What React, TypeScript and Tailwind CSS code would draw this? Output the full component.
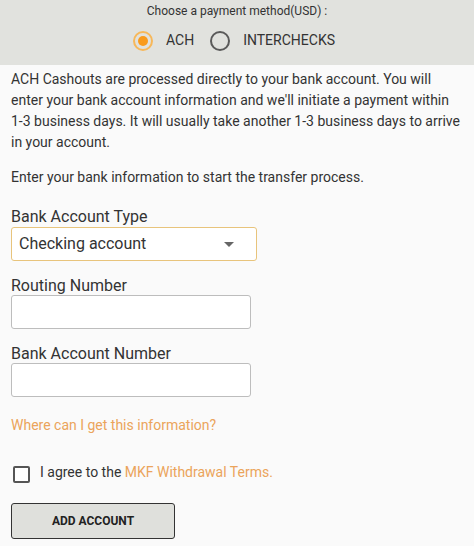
import { useState } from 'react';

type Method = 'ach' | 'interchecks';

function Radio({ checked, label, onClick }: { checked: boolean; label: string; onClick: () => void }) {
  return (
    <button type="button" onClick={onClick} className="flex items-center">
      {checked ? (
        <span className="flex h-[20px] w-[20px] items-center justify-center rounded-full border-2 border-[#f7b85a]">
          <span className="h-[10px] w-[10px] rounded-full bg-[#f99b1c]" />
        </span>
      ) : (
        <span className="h-[20px] w-[20px] rounded-full border-2 border-[#5a5a5a]" />
      )}
      <span className="ml-[13px] text-[14px] text-[#333]">{label}</span>
    </button>
  );
}

export default function App() {
  const [method, setMethod] = useState<Method>('ach');
  const [agree, setAgree] = useState(false);

  return (
    <div className="min-h-[546px] w-[474px] bg-[#fafafa] font-['Roboto',sans-serif] text-[#333]">
      <div className="flex h-[65px] flex-col items-center bg-[#e1e2de] pt-[3px]">
        <div className="text-[12px] leading-[16px] text-[#333]">Choose a payment method(USD) :</div>
        <div className="mt-[11px] flex items-center gap-[16px] pr-[6px]">
          <Radio checked={method === 'ach'} label="ACH" onClick={() => setMethod('ach')} />
          <Radio checked={method === 'interchecks'} label="INTERCHECKS" onClick={() => setMethod('interchecks')} />
        </div>
      </div>

      <div className="px-[11px]">
        <p className="mt-[4px] text-[14px] leading-[21px]">
          ACH Cashouts are processed directly to your bank account. You will enter your bank account information and
          we'll initiate a payment within 1-3 business days. It will usually take another 1-3 business days to arrive
          in your account.
        </p>
        <p className="mt-[14px] text-[14px] leading-[21px]">Enter your bank information to start the transfer process.</p>

        <label className="mt-[20px] block text-[16px] leading-[18px]">Bank Account Type</label>
        <div className="relative mt-px h-[34px] w-[246px] rounded-[3px] border border-[#e8c47c] bg-white">
          <select className="h-full w-full appearance-none bg-transparent pl-[7px] text-[16px] text-[#333] outline-none">
            <option>Checking account</option>
            <option>Savings account</option>
          </select>
          <span className="pointer-events-none absolute right-[22px] top-[14px] h-0 w-0 border-x-[5px] border-t-[5px] border-x-transparent border-t-[#666]" />
        </div>

        <label className="mt-[16px] block text-[16px] leading-[18px]">Routing Number</label>
        <input className="block h-[34px] w-[240px] rounded-[3px] border border-[#bdbdbd] bg-white px-2 text-[16px] outline-none" />

        <label className="mt-[16px] block text-[16px] leading-[18px]">Bank Account Number</label>
        <input className="block h-[34px] w-[240px] rounded-[3px] border border-[#bdbdbd] bg-white px-2 text-[16px] outline-none" />

        <a href="#" className="mt-[19px] block text-[14px] leading-[18px] text-[#eba45b]">
          Where can I get this information?
        </a>

        <label className="mt-[30px] flex h-[20px] items-center">
          <input
            type="checkbox"
            checked={agree}
            onChange={(e) => setAgree(e.target.checked)}
            className="ml-[2px] h-[17px] w-[17px] appearance-none rounded-[2px] border-2 border-[#555] bg-white checked:bg-[#f99b1c]"
          />
          <span className="ml-[10px] -mt-[3px] text-[14px]">
            I agree to the <a href="#" className="text-[#eba45b]">MKF Withdrawal Terms.</a>
          </span>
        </label>

        <button
          type="button"
          className="mt-[19px] h-[36px] w-[164px] rounded-[3px] border border-[#333] bg-[#dfe0dc] text-[12px] font-bold text-[#222]"
        >
          ADD ACCOUNT
        </button>
      </div>
    </div>
  );
}
